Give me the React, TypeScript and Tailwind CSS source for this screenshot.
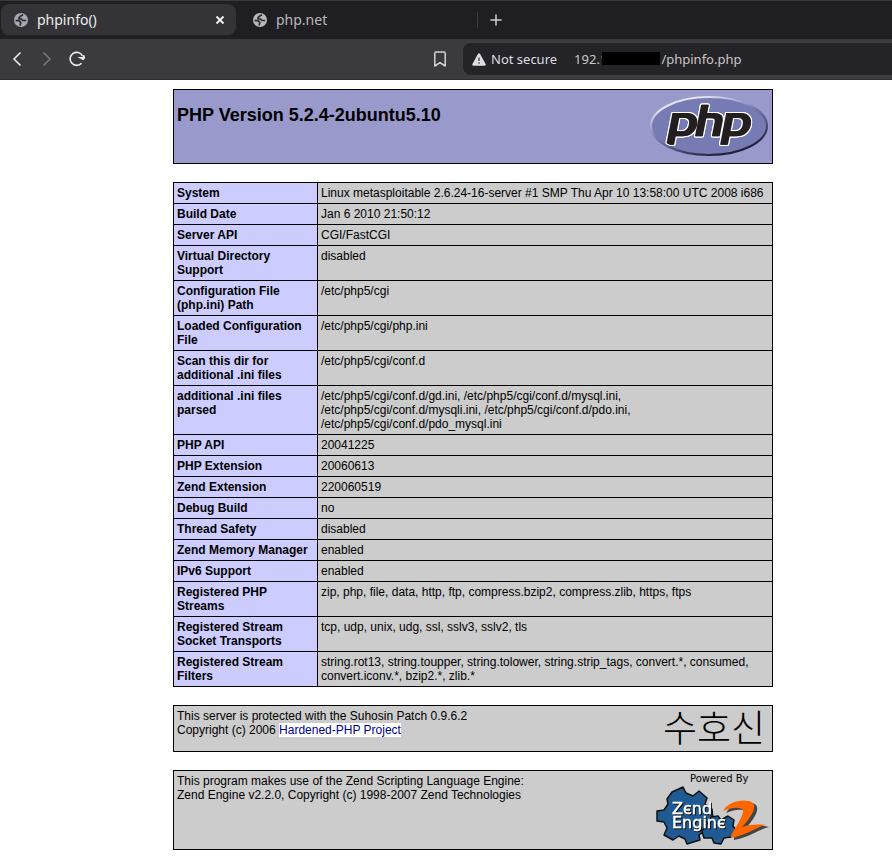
import type { ReactNode } from "react";
import { SiPhp } from "react-icons/si";

const info: [string, string][] = [
  ["System", "Linux metasploitable 2.6.24-16-server #1 SMP Thu Apr 10 13:58:00 UTC 2008 i686"],
  ["Build Date", "Jan 6 2010 21:50:12"],
  ["Server API", "CGI/FastCGI"],
  ["Virtual Directory Support", "disabled"],
  ["Configuration File (php.ini) Path", "/etc/php5/cgi"],
  ["Loaded Configuration File", "/etc/php5/cgi/php.ini"],
  ["Scan this dir for additional .ini files", "/etc/php5/cgi/conf.d"],
  [
    "additional .ini files parsed",
    "/etc/php5/cgi/conf.d/gd.ini, /etc/php5/cgi/conf.d/mysql.ini, /etc/php5/cgi/conf.d/mysqli.ini, /etc/php5/cgi/conf.d/pdo.ini, /etc/php5/cgi/conf.d/pdo_mysql.ini",
  ],
  ["PHP API", "20041225"],
  ["PHP Extension", "20060613"],
  ["Zend Extension", "220060519"],
  ["Debug Build", "no"],
  ["Thread Safety", "disabled"],
  ["Zend Memory Manager", "enabled"],
  ["IPv6 Support", "enabled"],
  ["Registered PHP Streams", "zip, php, file, data, http, ftp, compress.bzip2, compress.zlib, https, ftps"],
  ["Registered Stream Socket Transports", "tcp, udp, unix, udg, ssl, sslv3, sslv2, tls"],
  [
    "Registered Stream Filters",
    "string.rot13, string.toupper, string.tolower, string.strip_tags, convert.*, consumed, convert.iconv.*, bzip2.*, zlib.*",
  ],
];

function Globe({ className }: { className: string }) {
  return (
    <svg viewBox="0 0 14 14" className={className} aria-hidden="true">
      <circle cx="7" cy="7" r="7" fill="currentColor" />
      <g fill="none" stroke="#2b2b30" strokeWidth="1.7">
        <path d="M9 1.800 6.500 3.200 5 4.600V6h2.500l1.300 1.500h3.400" />
        <path d="M1.600 7.400 5.600 8l1.200 1.700-.8 2.700" />
      </g>
    </svg>
  );
}

function PhpLogo() {
  return (
    <svg width="120" height="67" viewBox="0 0 120 67" role="img" aria-label="PHP logo" className="shrink-0">
      <defs>
        <linearGradient id="rim" x1="0.2" y1="0" x2="0.8" y2="1">
          <stop offset="0.1" stopColor="#e4e5f2" />
          <stop offset="0.45" stopColor="#777bb3" />
          <stop offset="0.9" stopColor="#23213a" />
        </linearGradient>
        <mask id="letters" maskUnits="userSpaceOnUse" x="0" y="0" width="120" height="67">
          <ellipse cx="60" cy="34" rx="54" ry="26" fill="#fff" />
          <SiPhp x={-1} y={-26} size={120} color="#000" />
        </mask>
      </defs>
      <ellipse cx="60" cy="33" rx="58" ry="29" fill="#777bb3" />
      <g className="[filter:drop-shadow(1px_0_0_#231f20)_drop-shadow(1px_0_0_#fff)_drop-shadow(-1px_0_0_#fff)_drop-shadow(0_1px_0_#fff)_drop-shadow(0_-1px_0_#fff)]">
        <g mask="url(#letters)">
          <rect width="120" height="67" fill="#231f20" />
        </g>
      </g>
      <ellipse cx="60" cy="33" rx="58" ry="29" fill="none" stroke="url(#rim)" strokeWidth="2" />
    </svg>
  );
}

function ZendLogo() {
  return (
    <svg width="114" height="76" viewBox="0 0 114 76" role="img" aria-label="Powered by Zend Engine 2" className="shrink-0">
      <text x="35" y="8" fontSize="10" className="font-['DejaVu_Sans',sans-serif]">
        Powered By
      </text>
      <g stroke="#111" strokeWidth="1.500" strokeLinejoin="round" fill="#1f5b92">
        <path d="M17 18 28 13 31 19 38 22 44 17 52 24 50 30 57 35 58 46 52 52 50 57 44 61 45 66 32 70 30 65 24 62 18 66 9 61 12 54 9 48 2 47 2 37 9 36 13 30 12 25Z" />
        <path d="M56 43 63 42 66 46 73 42 79 46 78 52 82 57 76 63 69 64 66 70 59 69 57 64 49 64 47 57 51 52Z" />
      </g>
      <path
        transform="translate(3 2)"
        d="M68 37C72 29 84 25 94 27c9 2 6 12-6 25 8-3 15-3 23-1-10 2-16 9-35 13-1-5 9-14 12-26 1-6-12-5-20-1Z"
        fill="#444"
      />
      <path
        d="M68 37C72 29 84 25 94 27c9 2 6 12-7 26 8-3 15-3 24-2-10 2-16 9-35 13-1-5 9-14 12-26 1-6-12-5-20-1Z"
        fill="#ff6600"
      />
      <text
        fontSize="16"
        fill="#fff"
        stroke="#fff"
        strokeWidth="0.5"
        className="font-['DejaVu_Sans',sans-serif] [filter:drop-shadow(1px_1px_0_#111)]"
      >
        <tspan x="17" y="40">Zєnd</tspan>
        <tspan x="17" y="54">Enginє</tspan>
      </text>
    </svg>
  );
}

function Panel({ children, className }: { children: ReactNode; className: string }) {
  return (
    <div className={`flex items-start justify-between border border-black p-[3px] ${className}`}>{children}</div>
  );
}

export default function App() {
  return (
    <div className="min-h-screen bg-white">
      <header className="font-['Noto_Sans',sans-serif] text-[#c8c8c8]">
        <nav className="flex h-[39px] items-start border-t border-[#3a3a3e] bg-[#1f1e23] pt-[3px] pl-px">
          <div className="flex h-[31px] w-[235px] items-center rounded-[8px] bg-[#343438] pr-3 pl-[13px]">
            <Globe className="size-[14px] text-[#a4a9b3]" />
            <button className="ml-[9px] flex-1 text-left text-[14px] text-[#eeeeee]">phpinfo()</button>
            <button aria-label="Close tab" className="text-[#eeeeee]">
              <svg width="8" height="8" viewBox="0 0 8 8" stroke="currentColor" strokeWidth="2">
                <path d="m.5.5 7 7m0-7-7 7" />
              </svg>
            </button>
          </div>
          <div className="flex h-[31px] w-[241px] items-center pl-[17px]">
            <Globe className="size-[14px] text-[#b9b9b9]" />
            <button className="ml-[9px] text-[14px] text-[#b9b9b9]">php.net</button>
          </div>
          <div className="flex h-[31px] items-center">
            <span className="h-4 w-px bg-[#3b3b40]" />
            <button aria-label="New tab" className="ml-3 text-[#d0d0d0]">
              <svg width="12" height="12" viewBox="0 0 12 12" stroke="currentColor" strokeWidth="1.500">
                <path d="M6 .5v11M.5 6h11" />
              </svg>
            </button>
          </div>
        </nav>
        <div className="flex h-[41px] items-center border-b border-[#2e2d31] bg-[#3b3a3f] pl-3">
          <button aria-label="Back" className="text-[#eeeeee]">
            <svg width="10" height="16" viewBox="0 0 10 16" fill="none" stroke="currentColor" strokeWidth="1.500">
              <path d="M8.500 1.500 2 8l6.500 6.500" />
            </svg>
          </button>
          <button aria-label="Forward" className="ml-5 text-[#77777c]">
            <svg width="10" height="16" viewBox="0 0 10 16" fill="none" stroke="currentColor" strokeWidth="1.500">
              <path d="M1.500 1.500 8 8l-6.500 6.500" />
            </svg>
          </button>
          <button aria-label="Reload" className="ml-4 text-[#eeeeee]">
            <svg width="18" height="16" viewBox="0 0 18 16" fill="none" stroke="currentColor" strokeWidth="1.600">
              <path d="M14.500 5A6.500 6.500 0 1 0 13.500 12.200" />
              <path d="M12.500 6.800h3V4.200l.8 2.500-1.300 1.500Z" fill="currentColor" />
            </svg>
          </button>
          <button aria-label="Bookmark this page" className="ml-[348px] text-[#d4d4d4]">
            <svg width="12" height="16" viewBox="0 0 12 16" fill="none" stroke="currentColor" strokeWidth="1.500" strokeLinejoin="round">
              <path d="M.8 2.300Q.8 1 2.100 1h7.800q1.300 0 1.300 1.300V15L6 11.700.8 15Z" />
            </svg>
          </button>
          <div className="ml-[17px] flex h-8 min-w-0 flex-1 items-center rounded-l-[8px] bg-[#242328] pt-px pl-[9px] text-[13px]">
            <button className="flex items-center gap-[5px] text-[#dedee2]">
              <svg width="14" height="13" viewBox="0 0 14 13" aria-hidden="true">
                <path d="M7 1.500 12.500 11.500h-11Z" fill="currentColor" stroke="currentColor" strokeWidth="2.500" strokeLinejoin="round" />
                <path d="M7 4.500v3.500M7 9.200v1.600" stroke="#55555a" strokeWidth="1.500" />
              </svg>
              Not secure
            </button>
            <div className="relative ml-[17px] flex flex-1">
              <input
                aria-label="Address"
                className="w-full bg-transparent text-[#c6c6ca] outline-none"
                defaultValue={"192.1" + " ".repeat(16) + "/phpinfo.php"}
              />
              <span className="absolute top-[2px] left-7 h-[13px] w-[58px] bg-black" />
            </div>
          </div>
        </div>
      </header>

      <main className="flex justify-center py-[9px] pl-[54px] font-['Liberation_Sans',Arial,sans-serif] text-[12px] leading-[14px] text-black">
        <div className="flex w-full max-w-[600px] flex-col gap-[18px]">
          <Panel className="bg-[#9999cc]">
            <h1 className="mt-3 text-[18px] leading-[21px] font-bold">PHP Version 5.2.4-2ubuntu5.10</h1>
            <PhpLogo />
          </Panel>

          <table className="w-full table-fixed border-collapse">
            <colgroup>
              <col className="w-[144px]" />
              <col />
            </colgroup>
            <tbody>
              {info.map(([name, value]) => (
                <tr key={name}>
                  <th scope="row" className="border border-black bg-[#ccccff] p-[3px] text-left align-top font-bold">
                    {name}
                  </th>
                  <td className="border border-black bg-[#cccccc] p-[3px] align-top">{value}</td>
                </tr>
              ))}
            </tbody>
          </table>

          <Panel className="h-[47px] bg-[#cccccc]">
            <p>
              This server is protected with the Suhosin Patch 0.9.6.2
              <br />
              Copyright (c) 2006{" "}
              <a href="#hardened-php" className="bg-white text-[#000099]">
                Hardened-PHP Project
              </a>
            </p>
            <span lang="ko" className="mr-1 font-['Noto_Sans_CJK_KR',sans-serif] text-[37px] leading-[34px] font-light">
              수호신
            </span>
          </Panel>

          <Panel className="h-[80px] bg-[#cccccc]">
            <p>
              This program makes use of the Zend Scripting Language Engine:
              <br />
              Zend Engine v2.2.0, Copyright (c) 1998-2007 Zend Technologies
            </p>
            <ZendLogo />
          </Panel>
        </div>
      </main>
    </div>
  );
}
